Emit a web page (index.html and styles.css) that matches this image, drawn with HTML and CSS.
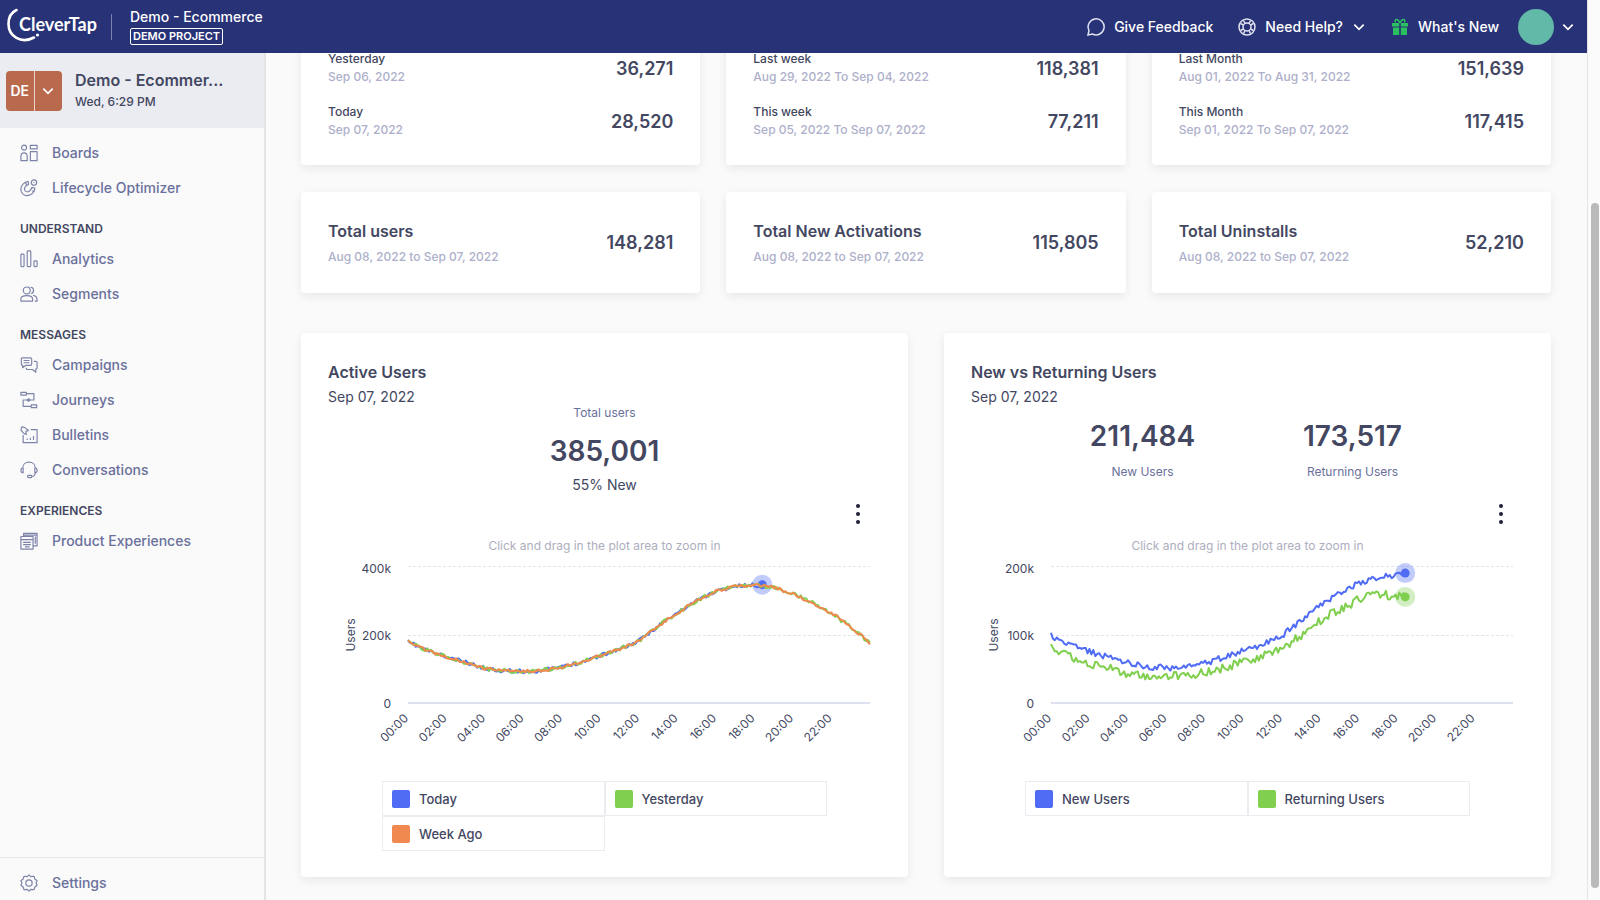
FILE: index.html
```html
<!DOCTYPE html>
<html lang="en">
<head>
  <meta charset="UTF-8">
  <meta name="viewport" content="width=device-width, initial-scale=1.0">
  <title>Demo - Ecommerce | CleverTap</title>
  <link rel="stylesheet" href="styles.css">
</head>
<body>
  <div class="app">
    <header class="topbar">
      <a class="logo" href="#" aria-label="CleverTap">
        <svg class="logo-arc" viewBox="0 0 36 36" aria-hidden="true">
          <path d="M9.500 2C4 4.500 1.500 10 1.500 16C1.500 28 14 36.500 27 29.500" fill="none" stroke="#fff" stroke-width="2.600" stroke-linecap="round"/>
          <circle cx="30.500" cy="27" r="1.600" fill="#fff"/>
        </svg>
        <span class="logo-text">CleverTap</span>
      </a>
      <div class="project">
        <span class="project-name">Demo - Ecommerce</span>
        <span class="project-tag">DEMO PROJECT</span>
      </div>
      <nav class="top-links">
        <a class="top-link" href="#">
          <svg viewBox="0 0 18 18"><path d="M1 17L2 12.500A8 8 0 1 1 5.500 16Z"/></svg>
          Give Feedback
        </a>
        <a class="top-link" href="#">
          <svg viewBox="0 0 18 18"><circle cx="9" cy="9" r="8"/><circle cx="9" cy="9" r="4"/><path d="M2.500 5.500L5.500 7M5.500 2.500L7 5.500M12.500 2.500L11 5.500M15.500 5.500L12.500 7M2.500 12.500L5.500 11M5.500 15.500L7 12.500M12.500 15.500L11 12.500M15.500 12.500L12.500 11"/></svg>
          Need Help?
          <svg class="chevron" viewBox="0 0 12 12"><path d="M2 4L6 8L10 4"/></svg>
        </a>
        <a class="top-link" href="#">
          <svg class="gift" viewBox="0 0 18 18"><path d="M2 5h6.200v3.500H1V5zM9.800 5H17v3.500H9.800zM2 9.500h6.200V17H2zM9.800 9.500H16V17H9.800z"/><path class="bow" d="M9 5C7 0 3 1 4.500 4.500M9 5C11 0 15 1 13.500 4.500"/></svg>
          What's New
        </a>
        <button class="account" type="button" aria-label="Account">
          <span class="avatar"></span>
          <svg class="chevron" viewBox="0 0 12 12"><path d="M2 4L6 8L10 4"/></svg>
        </button>
      </nav>
    </header>

    <aside class="sidebar">
      <div class="switcher">
        <button class="switch-btn" type="button" aria-label="Switch project">
          <span class="switch-code">DE</span>
          <span class="switch-arrow"><svg class="chevron" viewBox="0 0 12 12"><path d="M2 4L6 8L10 4"/></svg></span>
        </button>
        <div class="switch-info">
          <div class="switch-name">Demo - Ecommer...</div>
          <div class="switch-time">Wed, 6:29 PM</div>
        </div>
      </div>

      <nav class="menu">
        <a class="menu-item" href="#">
          <svg viewBox="0 0 20 20"><circle cx="4.500" cy="4" r="2.800"/><path d="M1 18.500V14C1 8.500 8 8.500 8 14V18.500Z"/><rect x="11.500" y="1.500" width="7.500" height="4"/><rect x="11.500" y="8.500" width="7.500" height="10"/></svg>
          Boards
        </a>
        <a class="menu-item" href="#">
          <svg viewBox="0 0 20 20"><path d="M9 2.500C1 5 -1 12 3 16.500C8 21 16 17 16.500 10L13 9.500C12.500 13 8.500 15.500 6 13.500C3.500 11 6 7 9.500 6Z"/><path d="M6 4L7.500 7M13.500 13L16 14"/><circle cx="15.500" cy="4" r="3"/><path d="M15.500 3.500v1"/></svg>
          Lifecycle Optimizer
        </a>
        <h2 class="menu-title">UNDERSTAND</h2>
        <a class="menu-item" href="#">
          <svg viewBox="0 0 20 20"><rect x="1" y="4.500" width="3.500" height="14" rx="1"/><rect x="8" y="1" width="4" height="17.500" rx="1"/><rect x="15.500" y="12" width="3.500" height="6.500" rx="1"/></svg>
          Analytics
        </a>
        <a class="menu-item" href="#">
          <svg viewBox="0 0 20 20"><circle cx="7.500" cy="6" r="3.800"/><path d="M1 18V15.500C1 10.500 14 10.500 14 15.500V18ZM11.500 2.500C16 2 16 9 12.500 9.500M14.500 11.500C18.500 12 19 14 19 18H16.500"/></svg>
          Segments
        </a>
        <h2 class="menu-title">MESSAGES</h2>
        <a class="menu-item" href="#">
          <svg viewBox="0 0 20 20"><path d="M2.500 2H11.500Q13 2 13 3.500V9Q13 10.500 11.500 10.500H6L3 13V10.500Q1.500 10.500 1.500 9V3.500Q1.500 2 2.500 2ZM4 5H10.500M4 7.500H10.500M15.500 6H17.500Q19 6 19 7.500V13Q19 14.500 17.500 14.500V18L14 15H8.500Q7 15 7 13"/></svg>
          Campaigns
        </a>
        <a class="menu-item" href="#">
          <svg viewBox="0 0 20 20"><rect x="1" y="1.500" width="6" height="3"/><path d="M7 3H15.500V10H3.500V17H12"/><rect x="12.500" y="15.500" width="6" height="3"/><path d="M9.500 8.500L11 10L9.500 11.500L8 10Z"/></svg>
          Journeys
        </a>
        <a class="menu-item" href="#">
          <svg viewBox="0 0 20 20"><path d="M2 1L5 1.500L9.500 5L6.500 6L7 9.500L4 8L1 4.500ZM3.500 10V18.500H19V4H12M8 15.500V14M11.500 15.500V13M15 15.500V11"/></svg>
          Bulletins
        </a>
        <a class="menu-item" href="#">
          <svg viewBox="0 0 20 20"><path d="M3 8C3 -1 17 -1 17 8M3 7.500Q1 8 1 10.500T3.500 13V7.500M17 7.500Q19 8 19 10.500T16.500 13V7.500M17 13Q16.500 17 13 17.500"/><rect x="8.500" y="16" width="4.500" height="2.500" rx="1"/></svg>
          Conversations
        </a>
        <h2 class="menu-title">EXPERIENCES</h2>
        <a class="menu-item" href="#">
          <svg viewBox="0 0 20 20"><rect x="1" y="5" width="13.500" height="14"/><path d="M1 8.500H14.500M3.500 11.500H12M3.500 14H12M5.500 16.500H10.500M4 5V1.500H19V15.500H14.500M4 3.500H19M7 5V4M17 5V13"/></svg>
          Product Experiences
        </a>
      </nav>

      <div class="menu-bottom">
        <a class="menu-item" href="#">
          <svg viewBox="0 0 20 20"><path d="M10 1L12 3L15.500 2.500L16.500 5.500L19 7.500L17.800 10L19 12.500L16.500 14.500L15.500 17.500L12 17L10 19L8 17L4.500 17.500L3.500 14.500L1 12.500L2.200 10L1 7.500L3.500 5.500L4.500 2.500L8 3Z"/><circle cx="10" cy="10" r="3.500"/></svg>
          Settings
        </a>
      </div>
    </aside>

    <main class="content">
      <section class="cards">
        <div class="card periods">
          <div class="period"><div><div class="label">Yesterday</div><div class="dates">Sep 06, 2022</div></div><div class="value">36,271</div></div>
          <div class="period"><div><div class="label">Today</div><div class="dates">Sep 07, 2022</div></div><div class="value">28,520</div></div>
        </div>
        <div class="card periods">
          <div class="period"><div><div class="label">Last week</div><div class="dates">Aug 29, 2022 To Sep 04, 2022</div></div><div class="value">118,381</div></div>
          <div class="period"><div><div class="label">This week</div><div class="dates">Sep 05, 2022 To Sep 07, 2022</div></div><div class="value">77,211</div></div>
        </div>
        <div class="card periods">
          <div class="period"><div><div class="label">Last Month</div><div class="dates">Aug 01, 2022 To Aug 31, 2022</div></div><div class="value">151,639</div></div>
          <div class="period"><div><div class="label">This Month</div><div class="dates">Sep 01, 2022 To Sep 07, 2022</div></div><div class="value">117,415</div></div>
        </div>

        <div class="card total">
          <div><h3 class="total-title">Total users</h3><div class="dates">Aug 08, 2022 to Sep 07, 2022</div></div>
          <div class="value">148,281</div>
        </div>
        <div class="card total">
          <div><h3 class="total-title">Total New Activations</h3><div class="dates">Aug 08, 2022 to Sep 07, 2022</div></div>
          <div class="value">115,805</div>
        </div>
        <div class="card total">
          <div><h3 class="total-title">Total Uninstalls</h3><div class="dates">Aug 08, 2022 to Sep 07, 2022</div></div>
          <div class="value">52,210</div>
        </div>
      </section>

      <section class="charts">
        <div class="card chart-card">
          <h3 class="chart-title">Active Users</h3>
          <div class="chart-date">Sep 07, 2022</div>
          <div class="stats">
            <div class="stat">
              <div class="stat-label stat-top">Total users</div>
              <div class="stat-number">385,001</div>
              <div class="stat-note">55% New</div>
            </div>
          </div>
          <button class="more" type="button" aria-label="Chart menu"><i></i><i></i><i></i></button>
          <div class="hint">Click and drag in the plot area to zoom in</div>
          <svg class="plot" id="activeUsers" viewBox="0 0 553 200"></svg>
          <div class="legend">
            <button type="button"><span class="swatch blue"></span>Today</button>
            <button type="button"><span class="swatch green"></span>Yesterday</button>
            <button type="button"><span class="swatch orange"></span>Week Ago</button>
          </div>
        </div>

        <div class="card chart-card">
          <h3 class="chart-title">New vs Returning Users</h3>
          <div class="chart-date">Sep 07, 2022</div>
          <div class="stats pair">
            <div class="stat">
              <div class="stat-number">211,484</div>
              <div class="stat-label">New Users</div>
            </div>
            <div class="stat">
              <div class="stat-number">173,517</div>
              <div class="stat-label">Returning Users</div>
            </div>
          </div>
          <button class="more" type="button" aria-label="Chart menu"><i></i><i></i><i></i></button>
          <div class="hint">Click and drag in the plot area to zoom in</div>
          <svg class="plot" id="newReturning" viewBox="0 0 553 200"></svg>
          <div class="legend">
            <button type="button"><span class="swatch blue"></span>New Users</button>
            <button type="button"><span class="swatch green"></span>Returning Users</button>
          </div>
        </div>
      </section>
    </main>

    <div class="scrollbar"><div class="thumb"></div></div>
  </div>
  <script src="charts.js"></script>
</body>
</html>
```
FILE: styles.css
```css
* {
  box-sizing: border-box;
}
body {
  margin: 0;
  font-family: Inter, "Liberation Sans", sans-serif;
  font-size: 14px;
  color: #434761;
  background-color: #fafafa;
}
h2, h3 {
  margin: 0;
}
a {
  color: inherit;
  text-decoration: none;
}
button {
  font: inherit;
  color: inherit;
  border: none;
  background: none;
  padding: 0;
  cursor: pointer;
}
.app {
  display: grid;
  grid-template-columns: 266px 1fr 13px;
  grid-template-rows: 53px 1fr;
  height: 100vh;
  overflow: hidden;
}

/* Top bar */
.topbar {
  grid-column: 1 / 3;
  display: flex;
  align-items: center;
  padding: 0 12px 0 7px;
  background-color: #283277;
  color: #fff;
  z-index: 1;
}
.logo {
  position: relative;
  display: flex;
  align-items: flex-start;
  height: 26px;
  width: 105px;
  padding-left: 12px;
  border-right: 1px solid #7a80ad;
}
.logo-arc {
  position: absolute;
  left: 0;
  top: -6px;
  width: 36px;
  height: 36px;
}
.logo-text {
  font-family: Lato, sans-serif;
  font-weight: 700;
  font-size: 18px;
  line-height: 20px;
}
.project {
  display: flex;
  flex-direction: column;
  align-items: flex-start;
  gap: 2px;
  padding-left: 18px;
}
.project-name {
  font-weight: 500;
  font-size: 14px;
  line-height: 18px;
}
.project-tag {
  border: 1px solid #fff;
  border-radius: 2px;
  padding: 0 2px;
  font-weight: 600;
  font-size: 11px;
  line-height: 15px;
}
.top-links {
  display: flex;
  align-items: center;
  margin-left: auto;
  font-weight: 500;
  font-size: 14px;
}
.top-link {
  display: flex;
  align-items: center;
  gap: 9px;
  margin-right: 25px;
}
.top-link:nth-child(3) {
  margin-right: 19px;
}
.top-link svg,
.account svg {
  width: 18px;
  height: 18px;
  fill: none;
  stroke: #dfe1f0;
  stroke-width: 1.5;
}
.top-link .gift {
  fill: #2bc160;
  stroke: none;
}
.gift .bow {
  fill: none;
  stroke: #2bc160;
  stroke-width: 1.5;
}
.app svg.chevron {
  width: 14px;
  height: 14px;
  fill: none;
  stroke: #fff;
  stroke-width: 1.5;
}
.account {
  display: flex;
  align-items: center;
  gap: 7px;
}
.avatar {
  width: 36px;
  height: 36px;
  border-radius: 50%;
  background-color: #62b9a7;
}

/* Sidebar */
.sidebar {
  display: flex;
  flex-direction: column;
  border-right: 2px solid #e4e4e7;
  background-color: #fafafa;
}
.switcher {
  display: flex;
  align-items: center;
  gap: 13px;
  height: 75px;
  padding-left: 6px;
  background-color: #ebecf2;
}
.switch-btn {
  display: flex;
  width: 56px;
  height: 40px;
  border-radius: 4px;
  background-color: #b9694c;
  color: #fff;
}
.switch-code,
.switch-arrow {
  flex: 1;
  display: flex;
  align-items: center;
  justify-content: center;
  height: 100%;
  font-weight: 600;
}
.switch-arrow {
  border-left: 1px solid #ecd5cc;
}
.switch-name {
  font-weight: 600;
  font-size: 16px;
  line-height: 22px;
}
.switch-time {
  font-weight: 500;
  font-size: 12px;
  line-height: 22px;
}
.menu {
  padding-top: 7px;
}
.menu-item {
  display: flex;
  align-items: center;
  gap: 14px;
  height: 35px;
  padding-left: 20px;
  font-weight: 500;
  color: #6a709c;
}
.menu-item svg {
  width: 18px;
  height: 18px;
  fill: none;
  stroke: #7d83a9;
  stroke-width: 1.3;
  stroke-linejoin: round;
}
.menu-title {
  margin-top: 12px;
  padding-left: 20px;
  font-weight: 600;
  font-size: 12px;
  line-height: 24px;
}
.menu-bottom {
  margin-top: auto;
  padding: 7px 0 0;
  border-top: 1px solid #e8e8ec;
}

/* Content, scrolled down to its end */
.content {
  display: flex;
  flex-direction: column;
  justify-content: flex-end;
  gap: 40px;
  min-width: 0;
  min-height: 0;
  padding: 0 36px 23px 35px;
}
.cards {
  display: grid;
  grid-template-columns: repeat(3, 1fr);
  gap: 27px 26px;
}
.charts {
  display: grid;
  grid-template-columns: 1fr 1fr;
  gap: 36px;
}
.card {
  padding: 26px 27px;
  border-radius: 4px;
  background-color: #fff;
  box-shadow: 0 3px 10px rgba(0, 0, 0, 0.08);
}
.periods {
  display: flex;
  flex-direction: column;
  gap: 17px;
}
.period,
.total {
  display: flex;
  align-items: center;
  justify-content: space-between;
}
.total {
  height: 101px;
}
.label {
  font-weight: 500;
  font-size: 12px;
  line-height: 18px;
}
.dates {
  font-weight: 500;
  font-size: 12px;
  line-height: 18px;
  color: #adafca;
}
.value {
  font-weight: 600;
  font-size: 18px;
}
.total-title {
  font-weight: 600;
  font-size: 16px;
  line-height: 24px;
  margin-bottom: 5px;
}

/* Chart cards */
.chart-card {
  display: flex;
  flex-direction: column;
}
.chart-title {
  margin-bottom: 2px;
  font-weight: 600;
  font-size: 16px;
  line-height: 26px;
}
.chart-date {
  font-size: 14px;
  line-height: 20px;
}
.stats {
  display: flex;
  justify-content: center;
  height: 95px;
  text-align: center;
}
.stats.pair {
  gap: 20px;
  padding-top: 9px;
}
.pair .stat {
  width: 190px;
}
.stat-label {
  margin-top: 8px;
  font-size: 12px;
  line-height: 16px;
  color: #6a709c;
}
.stat-top {
  margin: 0 0 12px;
  line-height: 12px;
}
.stat-number {
  font-weight: 600;
  font-size: 28px;
  line-height: 40px;
}
.stat-note {
  font-size: 14px;
  line-height: 28px;
}
.more {
  align-self: flex-end;
  display: flex;
  flex-direction: column;
  align-items: center;
  justify-content: center;
  gap: 4px;
  width: 24px;
  height: 24px;
  margin-right: 11px;
}
.more i {
  width: 4px;
  height: 4px;
  border-radius: 50%;
  background-color: #1d2036;
}
.hint {
  margin-top: 12px;
  font-size: 12px;
  line-height: 16px;
  text-align: center;
  color: #adaebe;
}
.plot {
  display: block;
  width: 100%;
  height: auto;
}
.plot text {
  font-size: 12px;
  fill: #434761;
}
.plot .grid {
  stroke: #e3e4ea;
  stroke-dasharray: 3 2;
}
.plot .axis {
  stroke: #dde1f0;
  stroke-width: 2;
}
.plot .line {
  fill: none;
  stroke-width: 2;
  stroke-linejoin: round;
}
.legend {
  display: grid;
  grid-template-columns: 1fr 1fr;
  width: 445px;
  max-width: 100%;
  margin: 27px auto 0;
}
.legend button {
  display: flex;
  align-items: center;
  gap: 9px;
  height: 35px;
  padding-left: 9px;
  border: 1px solid #ebecf2;
  font-weight: 500;
  font-size: 13px;
}
.swatch {
  width: 18px;
  height: 18px;
  border-radius: 2px;
}
.blue {
  background-color: #506cf4;
}
.green {
  background-color: #80cf4f;
}
.orange {
  background-color: #f0894f;
}

/* Scrollbar */
.scrollbar {
  grid-column: 3;
  grid-row: 1 / 3;
  padding: 203px 1px 12px 3px;
  border-left: 1px solid #e4e4e7;
  background-color: #fbfbfb;
}
.thumb {
  height: 100%;
  border-radius: 5px;
  background-color: #bababa;
}
```
FILE: charts.js
```js
// plot area inside the svg
const LEFT = 80, WIDTH = 462, TOP = 13, BASE = 149;

const BLUE = '#506cf4', GREEN = '#80cf4f', ORANGE = '#f0894f';

// one value per hour, in thousands
const active = [179, 155, 135, 119, 102, 95, 93, 96, 106, 121, 140, 159, 182, 227, 265, 301, 329, 343, 347, 340, 321, 295, 265, 223, 177];
const fresh = [99, 84, 76, 67, 60, 53, 52, 52, 58, 68, 77, 86, 99, 122, 143, 162, 176, 185, 188, 191];
const returning = [80, 70, 56, 52, 43, 41, 39, 41, 45, 52, 61, 70, 79, 100, 121, 138, 152, 160, 157, 156];

function random(seed) {
  return function() {
    seed = (seed * 16807) % 2147483647;
    return seed / 2147483647 - 0.5;
  };
}

function line(values, max, end, noise, seed, color) {
  const rnd = random(seed);
  const points = [];
  const steps = Math.round(end * 10);
  for (let i = 0; i <= steps; i++) {
    const hour = i / 10;
    const a = Math.min(Math.floor(hour), values.length - 2);
    const value = values[a] + (values[a + 1] - values[a]) * (hour - a);
    const x = LEFT + hour / 24 * WIDTH;
    const y = BASE - value / max * (BASE - TOP) + rnd() * noise;
    points.push(x.toFixed(1) + ',' + y.toFixed(1));
  }
  return `<polyline class="line" stroke="${color}" points="${points.join(' ')}"/>`;
}

function marker(value, max, color) {
  const x = LEFT + 18.4 / 24 * WIDTH;
  const y = BASE - value / max * (BASE - TOP);
  return `<circle cx="${x}" cy="${y}" r="10" fill="${color}" opacity="0.35"/><circle cx="${x}" cy="${y}" r="4.5" fill="${color}"/>`;
}

function frame(max) {
  const mid = (TOP + BASE) / 2;
  let out = `<line class="grid" x1="${LEFT}" x2="${LEFT + WIDTH}" y1="${TOP - 0.5}" y2="${TOP - 0.5}"/>`;
  out += `<line class="grid" x1="${LEFT}" x2="${LEFT + WIDTH}" y1="${mid + 0.5}" y2="${mid + 0.5}"/>`;
  out += `<line class="axis" x1="${LEFT}" x2="${LEFT + WIDTH}" y1="${BASE}" y2="${BASE}"/>`;
  out += `<text x="63" y="${TOP + 6}" text-anchor="end">${max}k</text>`;
  out += `<text x="63" y="${mid + 5}" text-anchor="end">${max / 2}k</text>`;
  out += `<text x="63" y="${BASE + 5}" text-anchor="end">0</text>`;
  out += `<text transform="translate(27 ${mid}) rotate(-90)" text-anchor="middle">Users</text>`;
  for (let h = 0; h < 24; h += 2) {
    const x = LEFT + 1 + h / 24 * WIDTH;
    out += `<text transform="translate(${x} 165) rotate(-45)" text-anchor="end">${String(h).padStart(2, '0')}:00</text>`;
  }
  return out;
}

document.getElementById('activeUsers').innerHTML = frame(400)
  + marker(348, 400, BLUE)
  + line(active, 400, 18.4, 4, 11, BLUE)
  + line(active, 400, 24, 4, 47, GREEN)
  + line(active, 400, 24, 3, 93, ORANGE);

document.getElementById('newReturning').innerHTML = frame(200)
  + line(fresh, 200, 18.4, 6, 29, BLUE)
  + line(returning, 200, 18.4, 9, 71, GREEN)
  + marker(191, 200, BLUE)
  + marker(156, 200, GREEN);
```
